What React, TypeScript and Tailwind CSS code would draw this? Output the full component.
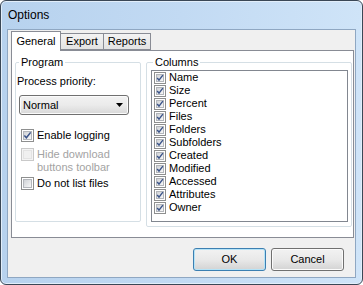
import React from "react";

// Windows 7 style "Options" dialog — General tab with the Program group
// and the Columns check list.

const FONT = "font-['Liberation_Sans',Arial,sans-serif]";

const COLUMNS = [
  "Name",
  "Size",
  "Percent",
  "Files",
  "Folders",
  "Subfolders",
  "Created",
  "Modified",
  "Accessed",
  "Attributes",
  "Owner",
];

function CheckBox({ checked, disabled, size = 13 }: { checked?: boolean; disabled?: boolean; size?: number }) {
  const box = size === 13 ? "h-[13px] w-[13px]" : "h-[12px] w-[12px]";
  return (
    <span
      className={[
        "relative flex-shrink-0 border",
        box,
        disabled ? "border-[#c9c9c9] bg-[#f4f4f4]" : "border-[#8e8f8f] bg-white",
      ].join(" ")}
    >
      <span
        className={[
          "absolute inset-[1px] border",
          disabled
            ? "border-[#e3e3e3] bg-[#f0f0f0]"
            : "border-[#b3b6bb] bg-gradient-to-br from-[#cfd2d6] to-[#f7f7f7]",
        ].join(" ")}
      />
      {checked && (
        <svg className="absolute inset-0 h-full w-full" viewBox="0 0 13 13">
          <path d="M2.8 6.6l2.4 2.6L10.2 2.8" fill="none" stroke="#3a5389" strokeWidth="1.8" />
        </svg>
      )}
    </span>
  );
}

function Button({ label, isDefault }: { label: string; isDefault?: boolean }) {
  return (
    <button
      type="button"
      className={[
        "h-[23px] w-[73px] rounded-[3px] border text-[11px] leading-none text-black",
        "bg-gradient-to-b from-[#f2f2f2] via-[#e9e9e9] to-[#d3d3d3]",
        isDefault
          ? "border-[#3c7fb1] shadow-[inset_0_0_0_1px_#b5e3f7]"
          : "border-[#707070] shadow-[inset_0_0_0_1px_#fbfbfb]",
      ].join(" ")}
    >
      {label}
    </button>
  );
}

export default function App() {
  return (
    <div className={`h-[285px] w-[363px] bg-white ${FONT}`}>
      {/* ── Window frame ─────────────────────────────────────────────── */}
      <div className="flex h-full w-full flex-col rounded-[6px] border border-[#3a4756] bg-gradient-to-r from-[#b7d2ee] via-[#c2daf3] to-[#cfe4f8] shadow-[inset_0_0_0_1px_#e2eefa]">
        <div className="h-[28px] pl-[7px] pt-[6px] text-[12px] leading-[16px] text-black">Options</div>

        {/* ── Client area ──────────────────────────────────────────── */}
        <div className="mx-[6px] mb-[6px] flex flex-1 flex-col border border-[#8fa7c2] bg-[#f0f0f0] text-[11px] text-black">
          <div className="pl-[3px] pr-[1px] pt-[1px]">
            {/* Tabs */}
            <div className="flex h-[19px] items-end">
              <div className="relative z-10 -mb-px flex h-[20px] w-[50px] items-start justify-center border border-b-0 border-[#898c95] bg-white pt-[3px] leading-[13px]">
                General
              </div>
              <div className="flex h-[17px] w-[43px] items-center justify-center border border-l-0 border-[#898c95] bg-gradient-to-b from-[#f3f3f3] to-[#e3e3e3] leading-[13px]">
                Export
              </div>
              <div className="flex h-[17px] w-[47px] items-center justify-center border border-l-0 border-[#898c95] bg-gradient-to-b from-[#f3f3f3] to-[#e3e3e3] leading-[13px]">
                Reports
              </div>
            </div>

            {/* Tab page */}
            <div className="flex h-[188px] border border-[#898c95] bg-white pt-[5px]">
              {/* Program */}
              <fieldset className="ml-[3px] h-[166px] w-[126px] rounded-[2px] border border-[#d5dfe5] px-[1px]">
                <legend className="ml-[2px] px-[2px] leading-[13px]">Program</legend>
                <p className="mt-[6px] leading-[13px]">Process priority:</p>
                <div className="ml-[2px] mt-[7px] flex h-[20px] w-[110px] items-center justify-between rounded-[3px] border border-[#707070] bg-gradient-to-b from-[#f2f2f2] via-[#ebebeb] to-[#d8d8d8] pl-[3px] pr-[5px] shadow-[inset_0_0_0_1px_#fbfbfb]">
                  <span className="leading-[13px]">Normal</span>
                  <svg className="h-[4px] w-[7px]" viewBox="0 0 7 4">
                    <path d="M0 0h7L3.5 4z" fill="#000" />
                  </svg>
                </div>

                <div className="ml-[4px] mt-[14px] flex items-center gap-[3px]">
                  <CheckBox checked />
                  <span className="leading-[13px]">Enable logging</span>
                </div>
                <div className="ml-[4px] mt-[6px] flex items-start gap-[3px]">
                  <CheckBox disabled />
                  <span className="leading-[13px] text-[#a3a3a3]">
                    Hide download
                    <br />
                    buttons toolbar
                  </span>
                </div>
                <div className="ml-[4px] mt-[3px] flex items-center gap-[3px]">
                  <CheckBox />
                  <span className="leading-[13px]">Do not list files</span>
                </div>
              </fieldset>

              {/* Columns */}
              <fieldset className="ml-[5px] h-[171px] w-[206px] rounded-[2px] border border-[#d5dfe5]">
                <legend className="ml-[6px] px-[2px] leading-[13px]">Columns</legend>
                <div className="ml-[4px] mt-[1px] h-[152px] w-[197px] border border-[#828790] bg-white pl-[2px] pt-[0px]">
                  {COLUMNS.map((name) => (
                    <div key={name} className="flex h-[13px] items-center gap-[3px]">
                      <CheckBox checked size={12} />
                      <span className="leading-[13px]">{name}</span>
                    </div>
                  ))}
                </div>
              </fieldset>
            </div>
          </div>

          {/* Buttons */}
          <div className="mt-[10px] flex justify-end gap-[5px] pr-[11px]">
            <Button label="OK" isDefault />
            <Button label="Cancel" />
          </div>
        </div>
      </div>
    </div>
  );
}
